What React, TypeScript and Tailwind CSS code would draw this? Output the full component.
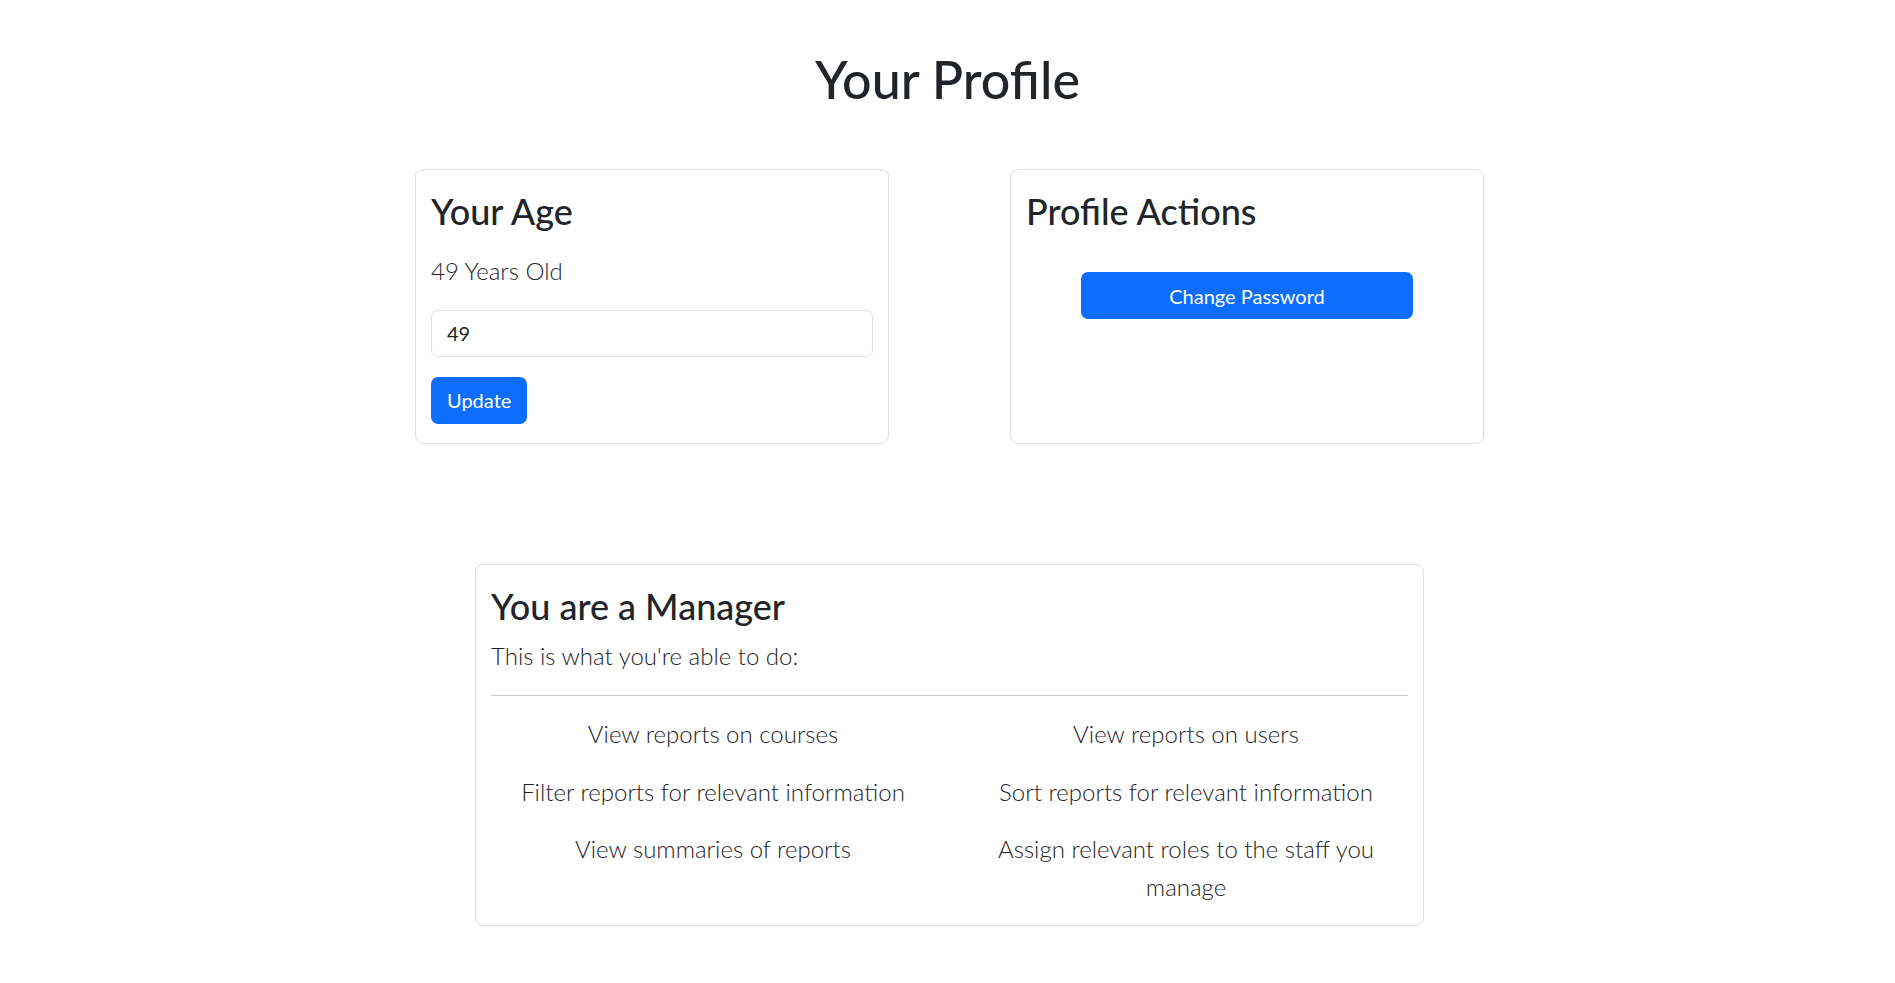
import React from "react";

const ABILITIES = [
  "View reports on courses",
  "View reports on users",
  "Filter reports for relevant information",
  "Sort reports for relevant information",
  "View summaries of reports",
  "Assign relevant roles to the staff you manage",
];

function Card({ className = "", children }: { className?: string; children: React.ReactNode }) {
  return (
    <div className={`rounded-[8px] border border-[#dfdfdf] bg-white px-[15px] pt-[20px] ${className}`}>{children}</div>
  );
}

export default function App() {
  return (
    <div className="min-h-screen bg-white text-[#212529]" style={{ fontFamily: '"Lato", "Noto Sans", sans-serif' }}>
      <h1 className="pt-[48px] text-center text-[52px] font-medium leading-[62px]">Your Profile</h1>

      {/* Top row — age + actions */}
      <div className="mx-auto mt-[59px] flex w-[1073px] justify-between pl-[4px]">
        <Card className="w-[474px] pb-[19px]">
          <h2 className="text-[36px] font-medium leading-[43px]">Your Age</h2>
          <p className="mt-[19px] text-[24px] font-light leading-[37.5px] text-[#1f2327]">49 Years Old</p>
          <input
            defaultValue="49"
            className="mt-[20px] block h-[47px] w-full rounded-[7px] border border-[#dee2e6] px-[15px] text-[20px] outline-none"
          />
          <button className="mt-[20px] h-[47px] rounded-[7px] bg-[#0d6efd] px-[16px] text-[20px] text-white">
            Update
          </button>
        </Card>

        <Card className="w-[474px]">
          <h2 className="text-[36px] font-medium leading-[43px]">Profile Actions</h2>
          <div className="mt-[39px] flex justify-center">
            <button className="h-[47px] w-[332px] rounded-[7px] bg-[#0d6efd] text-[20px] text-white">
              Change Password
            </button>
          </div>
        </Card>
      </div>

      {/* Role summary */}
      <div className="mx-auto mt-[120px] w-[953px] pl-[4px]">
        <Card className="pb-[20px]">
          <h2 className="text-[36px] font-medium leading-[43px]">You are a Manager</h2>
          <p className="mt-[9px] text-[24px] font-light leading-[37.5px] text-[#1f2327]">
            This is what you&apos;re able to do:
          </p>
          <hr className="mt-[21px] border-t border-[#c8c9ca]" />
          <div className="mt-[19px] grid grid-cols-2 gap-x-[29px] gap-y-[20px]">
            {ABILITIES.map((a) => (
              <div key={a} className="text-center text-[24px] font-light leading-[37.5px] text-[#1f2327]">
                {a}
              </div>
            ))}
          </div>
        </Card>
      </div>
    </div>
  );
}
